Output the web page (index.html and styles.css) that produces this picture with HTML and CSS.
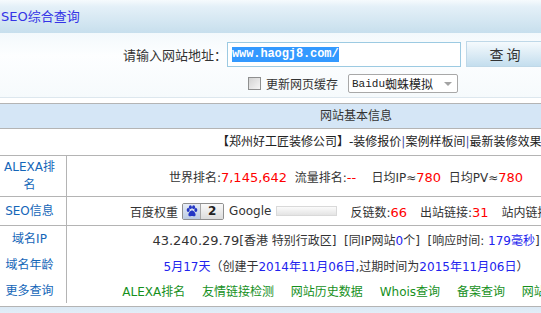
FILE: index.html
```html
<!DOCTYPE html>
<html lang="zh-CN">
<head>
    <meta charset="UTF-8">
    <title>SEO综合查询</title>
    <link rel="stylesheet" href="styles.css">
</head>
<body>
<div class="page">
    <!-- 标题栏 -->
    <div class="title-bar">SEO综合查询</div>

    <!-- 查询表单 -->
    <div class="search">
        <div class="search-row">
            <label class="search-label">请输入网站地址：</label>
            <div class="url-box"><span class="url-sel">www.haogj8.com/</span></div>
            <button class="btn">查 询</button>
        </div>
        <div class="search-opts">
            <span class="check"></span>
            <span class="opt-text">更新网页缓存</span>
            <div class="select">
                <span class="sel-latin">Baidu</span><span class="sel-cjk">蜘蛛模拟</span>
                <i class="arrow"></i>
            </div>
        </div>
    </div>

    <!-- 网站基本信息 -->
    <div class="panel">
        <div class="panel-head">网站基本信息</div>
        <div class="site-title">【郑州好工匠装修公司】-装修报价<span class="sep">|</span>案例样板间<span class="sep">|</span>最新装修效果图</div>

        <div class="row row-alexa">
            <div class="label">ALEXA排名</div>
            <div class="val"><span class="line">世界排名:<span class="red">7,145,642</span>&nbsp; 流量排名:<span class="red">--</span> &nbsp; &nbsp;日均IP≈<span class="red">780</span>&nbsp; 日均PV≈<span class="red">780</span></span></div>
        </div>

        <div class="row row-seo">
            <div class="label">SEO信息</div>
            <div class="val">
                <span class="line seo-line">
                    <span>百度权重</span>
                    <span class="bd-badge">
                        <span class="bd-paw">
                            <svg width="12" height="12" viewBox="0 0 12 12">
                                <ellipse cx="2.2" cy="5" rx="1.5" ry="1.9" fill="#2336c4"/>
                                <ellipse cx="4.4" cy="2.2" rx="1.5" ry="1.9" fill="#2336c4"/>
                                <ellipse cx="7.6" cy="2.2" rx="1.5" ry="1.9" fill="#2336c4"/>
                                <ellipse cx="9.8" cy="5" rx="1.5" ry="1.9" fill="#2336c4"/>
                                <path d="M6 5.6c-1.6 0-3.6 2.4-3.6 4.1 0 1.4 1.2 1.8 2 1.6.7-.2 1.1-.4 1.6-.4s.9.2 1.6.4c.8.2 2-.2 2-1.6 0-1.7-2-4.1-3.6-4.1z" fill="#2336c4"/>
                            </svg>
                        </span>
                        <span class="bd-num">2</span>
                    </span>
                    <span class="google">Google</span>
                    <span class="pr-bar"></span>
                    <span class="stat">反链数:<span class="red">66</span></span>
                    <span class="stat">出站链接:<span class="red">31</span></span>
                    <span class="stat">站内链接:<span class="red">9</span></span>
                </span>
            </div>
        </div>

        <div class="row row-plain">
            <div class="label">域名IP</div>
            <div class="val"><span class="line"><span class="ip">43.240.29.79</span>[香港 特别行政区]&nbsp; [同IP网站<span class="blue">0</span>个]&nbsp; [响应时间: <span class="blue">179毫秒</span>]</span></div>
        </div>

        <div class="row row-plain">
            <div class="label">域名年龄</div>
            <div class="val"><span class="line"><span class="blue">5月17天</span>（创建于<span class="blue">2014年11月06日</span>,过期时间为<span class="blue">2015年11月06日</span>）</span></div>
        </div>

        <div class="row row-plain row-last">
            <div class="label">更多查询</div>
            <div class="val">
                <span class="line links">
                    <a href="#">ALEXA排名</a>
                    <a href="#">友情链接检测</a>
                    <a href="#">网站历史数据</a>
                    <a href="#">Whois查询</a>
                    <a href="#">备案查询</a>
                    <a href="#">网站测速</a>
                </span>
            </div>
        </div>
    </div>

    <div class="next"></div>
</div>
</body>
</html>
```

FILE: styles.css
```css
body {
    margin: 0;
    overflow: hidden;
    background: #fff;
    color: #333;
    font: 12px "DejaVu Sans", "Noto Sans CJK SC", sans-serif;
}

.page {
    width: 712px;
}

/* 标题栏 */
.title-bar {
    height: 33px;
    line-height: 33px;
    padding-left: 1px;
    font-size: 13px;
    color: #3434e6;
    background: linear-gradient(#f6fafd, #e4f0f8 20%, #c7dfed);
}

/* 查询表单 */
.search {
    padding: 8px 0 4px;
    background: linear-gradient(#f3f9fc, #fdfeff 35%, #f6fafc);
    border-bottom: 1px solid #dde7ee;
}

.search-row {
    display: flex;
    align-items: center;
    height: 26px;
}

.search-label {
    width: 227px;
    text-align: right;
    font-size: 13px;
    color: #333;
}

.url-box {
    width: 234px;
    height: 25px;
    box-sizing: border-box;
    border: 1px solid #9ccae2;
    background: #fff;
    display: flex;
    align-items: center;
    padding-left: 4px;
}

.url-sel {
    background: #3399ff;
    color: #fff;
    font: bold 12px "Liberation Mono", monospace;
    line-height: 15px;
    letter-spacing: -0.1px;
}

.btn {
    margin-left: 5px;
    width: 78px;
    height: 26px;
    padding: 0;
    border: 1px solid #bfd8e8;
    background: linear-gradient(#f5fafd, #c4deee);
    color: #333;
    font: 14px "Noto Sans CJK SC", sans-serif;
}

.search-opts {
    display: flex;
    align-items: center;
    height: 19px;
    margin-top: 7px;
    padding-left: 248px;
}

.check {
    width: 13px;
    height: 13px;
    box-sizing: border-box;
    border: 1px solid #8e8f8f;
    background: linear-gradient(135deg, #d2d2d2, #f6f6f6);
}

.opt-text {
    margin-left: 5px;
}

.select {
    margin-left: 10px;
    width: 110px;
    height: 19px;
    box-sizing: border-box;
    border: 1px solid #a8a8a8;
    border-radius: 2px;
    background: #fff;
    display: flex;
    align-items: center;
    padding-left: 3px;
}

.sel-latin {
    font: 11px "Liberation Mono", monospace;
    color: #222;
}

.sel-cjk {
    color: #222;
}

.arrow {
    margin-left: auto;
    margin-right: 5px;
    width: 0;
    height: 0;
    border-left: 4px solid transparent;
    border-right: 4px solid transparent;
    border-top: 4px solid #a3a3a3;
}

/* 信息表格 */
.panel {
    margin-top: 5px;
    border-top: 1px solid #b4b4b4;
    border-bottom: 1px solid #b4b4b4;
    padding-bottom: 3px;
}

.panel-head {
    height: 24px;
    line-height: 24px;
    text-align: center;
    background: #d5e6f6;
    border-bottom: 1px solid #b4b4b4;
}

.site-title {
    height: 26px;
    line-height: 26px;
    padding-left: 217px;
    white-space: nowrap;
    color: #222;
    border-bottom: 1px solid #b4b4b4;
}

.sep {
    color: #4a55a8;
}

.row {
    display: grid;
    grid-template-columns: 67px 1fr;
}

.label {
    display: flex;
    align-items: center;
    justify-content: center;
    padding-right: 7px;
    border-right: 1px solid #b4b4b4;
    line-height: 18px;
    text-align: center;
    color: #1466b8;
}

.val {
    display: flex;
    align-items: center;
    justify-content: center;
    padding-right: 87px;
    white-space: nowrap;
}

.row-alexa {
    height: 40px;
    border-bottom: 1px solid #b4b4b4;
}

.row-seo {
    height: 28px;
    border-bottom: 1px solid #b4b4b4;
}

.row-plain {
    height: 26px;
}

.row-last {
    height: 25px;
}

.red {
    color: #ff0000;
    font-size: 13px;
}

.blue {
    color: #2222ee;
}

.ip {
    font-size: 13px;
}

/* SEO信息 */
.seo-line {
    display: flex;
    align-items: center;
}

.bd-badge {
    display: flex;
    margin-left: 4px;
    height: 17px;
    box-sizing: border-box;
    border: 1px solid #8f8f8f;
    border-radius: 2px;
    overflow: hidden;
}

.bd-paw {
    width: 17px;
    display: flex;
    align-items: center;
    justify-content: center;
    background: linear-gradient(#e6ecf6, #bccbe2);
    border-right: 1px solid #a6a6a6;
}

.bd-num {
    width: 22px;
    text-align: center;
    line-height: 15px;
    font-weight: bold;
    color: #222;
    background: linear-gradient(#fafafa, #dcdcdc);
}

.google {
    margin-left: 5px;
}

.pr-bar {
    margin-left: 5px;
    width: 61px;
    height: 10px;
    box-sizing: border-box;
    border: 1px solid #d9d9d9;
    background: linear-gradient(#fbfbfb, #e4e4e4);
}

.stat {
    margin-left: 13px;
}

/* 更多查询 */
.links a {
    color: #16901c;
    text-decoration: none;
    margin-left: 13px;
}

.links a:first-child {
    margin-left: 0;
}

.next {
    height: 12px;
    background: linear-gradient(#dbe9f5, #e9f2fa);
}
```
